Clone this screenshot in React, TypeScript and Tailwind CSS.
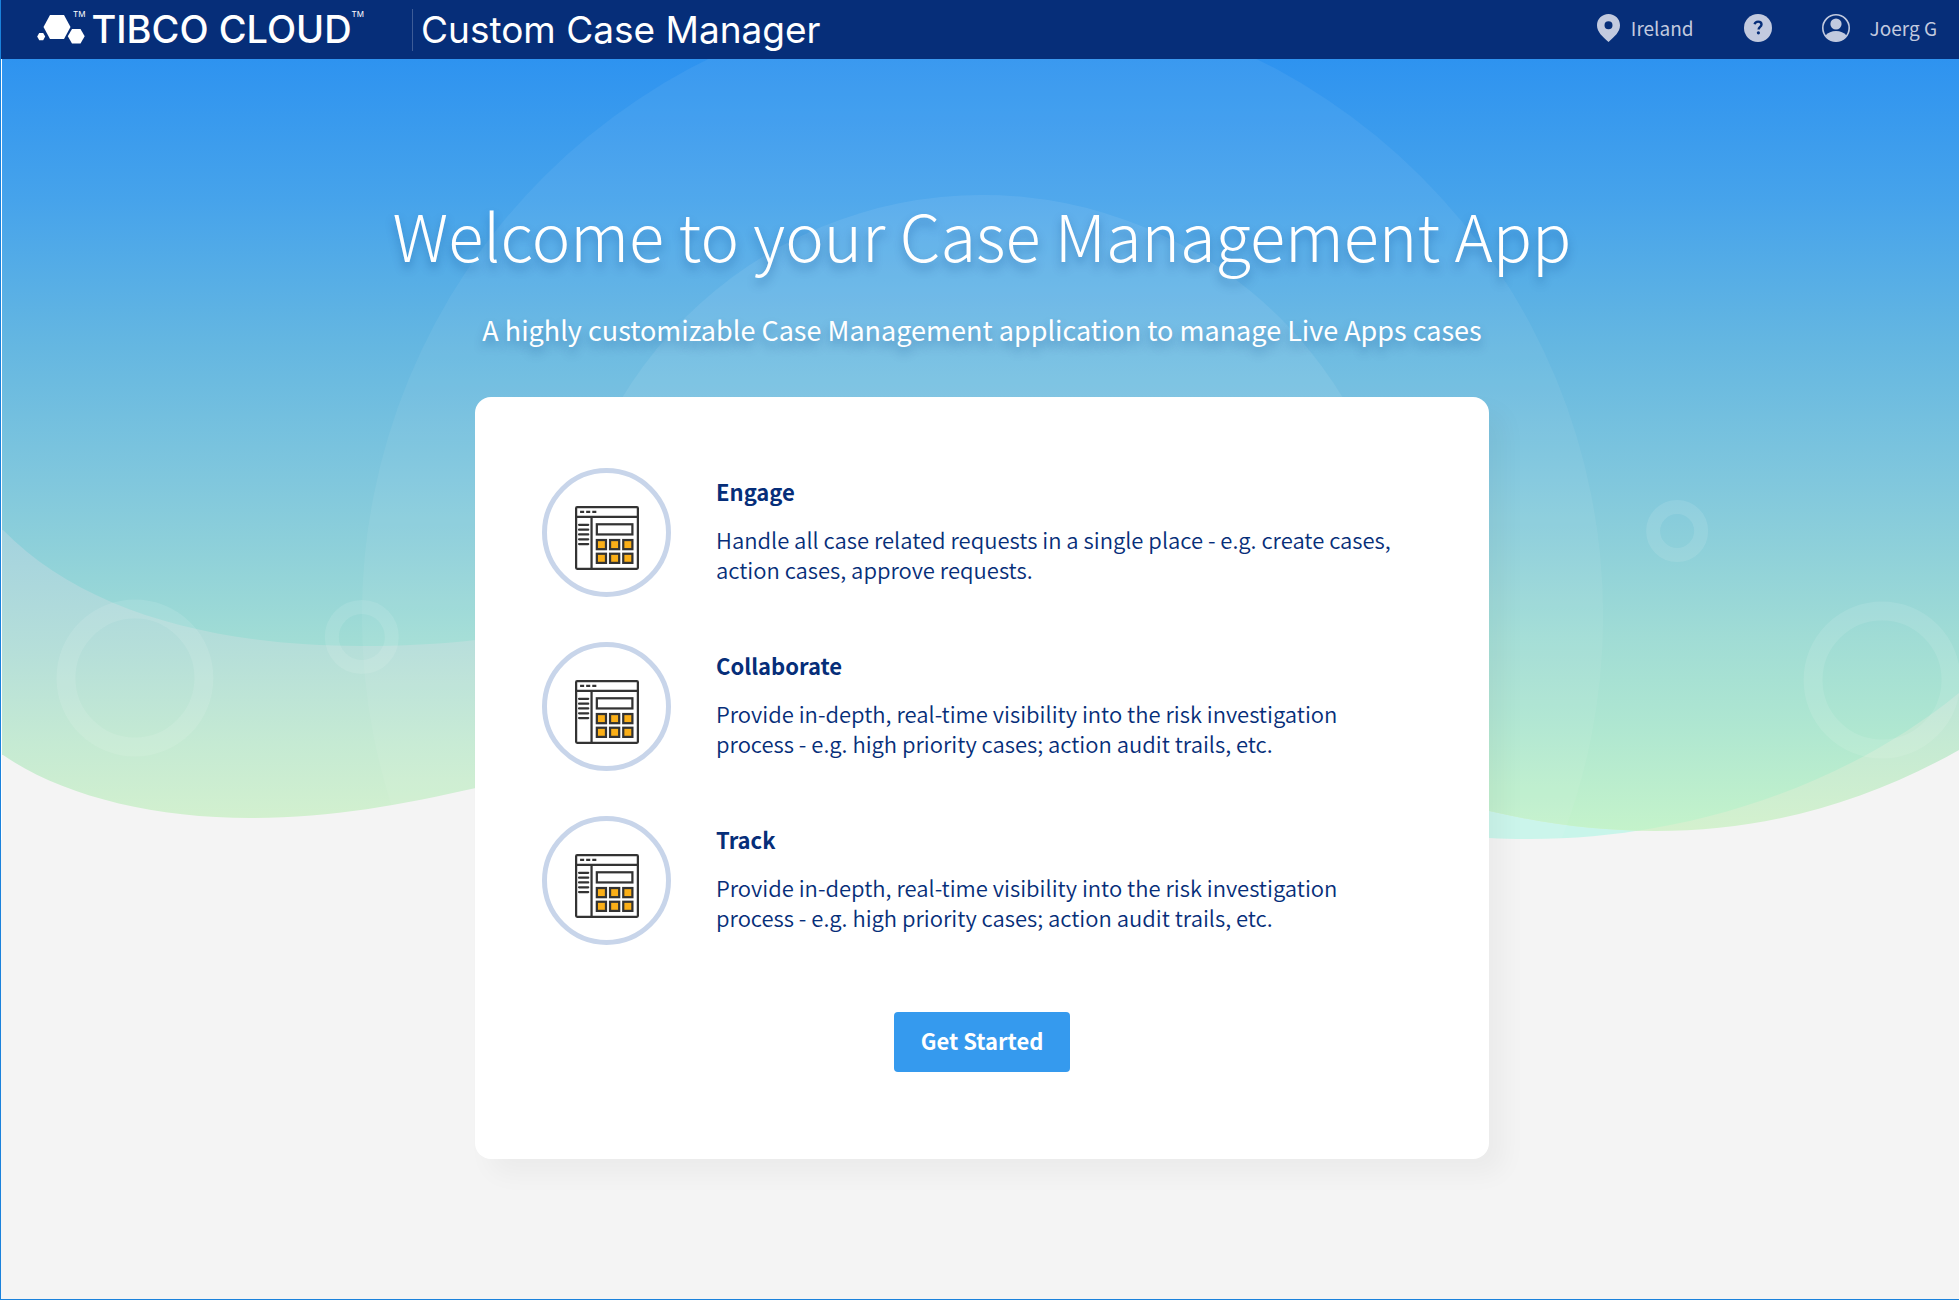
import React from 'react';

const features = [
  {
    title: 'Engage',
    text: 'Handle all case related requests in a single place - e.g. create cases, action cases, approve requests.',
  },
  {
    title: 'Collaborate',
    text: 'Provide in-depth, real-time visibility into the risk investigation process - e.g. high priority cases; action audit trails, etc.',
  },
  {
    title: 'Track',
    text: 'Provide in-depth, real-time visibility into the risk investigation process - e.g. high priority cases; action audit trails, etc.',
  },
];

function LogoMark() {
  return (
    <svg width="48" height="32" viewBox="0 0 48 32" fill="#fff" aria-hidden="true">
      <path d="M13 1h14l6.500 12L27 25H13L6.500 13Z" />
      <path d="M35 15h8.500l4.200 7.200-4.200 7.300H35l-4.200-7.300Z" />
      <path d="M2.200 19h4l2 3.600-2 3.600h-4l-2-3.600Z" />
    </svg>
  );
}

function PinIcon() {
  return (
    <svg width="23" height="28" viewBox="0 0 23 28" aria-hidden="true">
      <path
        fill="#c2cadf"
        fillRule="evenodd"
        d="M11.500 0C5 0 0 5 0 11.200 0 18 5.500 22.500 11.500 28 17.500 22.500 23 18 23 11.200 23 5 18 0 11.500 0Zm0 7.200a4 4 0 1 1 0 8 4 4 0 0 1 0-8Z"
      />
    </svg>
  );
}

function HelpIcon() {
  return (
    <svg width="28" height="28" viewBox="0 0 28 28" aria-hidden="true">
      <circle cx="14" cy="14" r="14" fill="#c2cadf" />
      <path d="M10.600 10.200c.4-1.700 1.700-2.600 3.500-2.600 2 0 3.400 1.100 3.400 2.800 0 2.400-2.900 2.500-2.900 5.100" fill="none" stroke="#062e79" strokeWidth="2.400" />
      <circle cx="14.400" cy="18.800" r="1.600" fill="#062e79" />
    </svg>
  );
}

function UserIcon() {
  return (
    <svg width="28" height="28" viewBox="0 0 28 28" aria-hidden="true">
      <circle cx="14" cy="14" r="13.200" fill="none" stroke="#c2cadf" strokeWidth="1.600" />
      <circle cx="14" cy="10" r="5.600" fill="#c2cadf" />
      <path d="M3.500 21.500c2.400-3 6.200-4.500 10.500-4.500s8.100 1.500 10.500 4.500A13.200 13.200 0 0 1 14 27.200 13.200 13.200 0 0 1 3.500 21.500Z" fill="#c2cadf" />
    </svg>
  );
}

function AppIcon() {
  return (
    <svg width="64" height="64" viewBox="0 0 63 63" fill="none" stroke="#333" strokeWidth="2.200" aria-hidden="true">
      <rect x="1.100" y="1.100" width="60.800" height="60.800" rx="1" />
      <path d="M1 10.800h61M16.300 11v51" />
      <path d="M5 5.800h4M11 5.800h4M17 5.800h4" />
      <path d="M4 18.500h9M4 23.300h9M4 28h9M4 32.800h9M4 37.500h9" strokeLinecap="round" />
      <rect x="21.500" y="18" width="35" height="10" />
      <g fill="#fbaf17">
        {[33.500, 47].map((y) =>
          [21.500, 34.500, 47.500].map((x) => <rect key={x + '-' + y} x={x} y={y} width="9" height="9" />)
        )}
      </g>
    </svg>
  );
}

const UPPER =
  'M0 0H1959V693C1840 790 1680 839 1530 839C1516 839 1502 839 1489 838C1120 815 820 600 475 640C440 644 400 646 360 646C210 646 80 610 2 530H0Z';
const LOWER =
  'M0 0H1959V750C1870 800 1770 831 1655 831C1600 831 1545 824 1489 811C1120 720 820 710 475 788C400 805 330 818 250 818C150 818 60 795 2 755H0Z';

function Backdrop() {
  return (
    <svg
      className="absolute inset-x-0 top-0 h-[840px] w-full"
      viewBox="0 0 1959 840"
      preserveAspectRatio="none"
      aria-hidden="true"
    >
      <defs>
        <linearGradient id="sky" gradientUnits="userSpaceOnUse" x1="0" y1="59" x2="0" y2="840">
          <stop offset="0" stopColor="#2e93f0" />
          <stop offset="0.180" stopColor="#46a3eb" />
          <stop offset="0.370" stopColor="#65b7e1" />
          <stop offset="0.540" stopColor="#80c7dd" />
          <stop offset="0.740" stopColor="#a0dcd5" />
          <stop offset="0.850" stopColor="#aee6d1" />
          <stop offset="1" stopColor="#c6f4ca" />
        </linearGradient>
        <linearGradient id="mist" gradientUnits="userSpaceOnUse" x1="0" y1="520" x2="0" y2="830">
          <stop offset="0" stopColor="#a2d1df" />
          <stop offset="0.430" stopColor="#b6dfd9" />
          <stop offset="0.720" stopColor="#c5ead3" />
          <stop offset="1" stopColor="#d4f1ce" />
        </linearGradient>
        <clipPath id="lower">
          <path d={LOWER} />
        </clipPath>
      </defs>
      <path d={UPPER} fill="#c8f5ea" />
      <path d={LOWER} fill="url(#mist)" />
      <path d={UPPER} fill="url(#sky)" clipPath="url(#lower)" />
      <g fill="#fff">
        <circle cx="982" cy="616" r="621" fillOpacity="0.060" />
        <circle cx="982" cy="617" r="422" fillOpacity="0.080" />
      </g>
      <g fill="none" stroke="#fff" strokeOpacity="0.100">
        <circle cx="134" cy="678" r="69" strokeWidth="19" />
        <circle cx="361" cy="637" r="30" strokeWidth="14" />
        <circle cx="1677" cy="531" r="24" strokeWidth="14" />
        <circle cx="1882" cy="680" r="69" strokeWidth="19" />
      </g>
      <rect width="1" height="840" fill="#fff" />
    </svg>
  );
}

export default function App() {
  return (
    <div className="relative min-h-screen border-b border-l border-[#1a82dc] bg-[#f4f4f4] font-['Noto_Sans_CJK_SC',sans-serif] text-[#062e79]">
      <Backdrop />
      <header className="relative flex h-[59px] items-center justify-between bg-[#062e79] pr-[22px] pl-9 text-[#c2cadf]">
        <div className="flex items-center font-['Inter',sans-serif] leading-10 text-white">
          <a href="#" className="flex items-center">
            <LogoMark />
            <sup className="-mt-6 -ml-3 text-[8px] leading-none">TM</sup>
            <span className="ml-1.5 pb-0.5 text-[38px] font-medium">TIBCO CLOUD</span>
            <sup className="-mt-6 text-[8px] leading-none">TM</sup>
          </a>
          <div className="ml-12 h-[42px] w-px bg-[#3d5c97]" />
          <div className="ml-2 text-[37px]">Custom Case Manager</div>
        </div>
        <nav className="flex items-center pb-1 text-[19px] leading-7">
          <button type="button" className="flex items-center gap-[11px]">
            <PinIcon />
            <span>Ireland</span>
          </button>
          <button type="button" className="ml-[50px]" aria-label="Help">
            <HelpIcon />
          </button>
          <button type="button" className="ml-[50px] flex items-center gap-5">
            <UserIcon />
            <span>Joerg G</span>
          </button>
        </nav>
      </header>
      <main className="relative flex flex-col items-center pt-[139px] pb-32 pl-1">
        <h1 className="text-center text-[65px] leading-[72px] font-light text-white [text-shadow:0_6px_10px_rgba(10,60,130,0.35)]">
          Welcome to your Case Management App
        </h1>
        <p className="mt-10 text-center text-[27px] leading-10 text-white [text-shadow:0_6px_10px_rgba(10,60,130,0.35)]">
          A highly customizable Case Management application to manage Live Apps cases
        </p>
        <section className="mt-[47px] flex w-full max-w-[1014px] flex-col items-center rounded-2xl bg-white px-[67px] pt-[71px] pb-[87px] shadow-[15px_15px_26px_rgba(0,0,0,0.04)]">
          <ul className="flex w-full flex-col gap-[45px]">
            {features.map((f) => (
              <li key={f.title} className="flex gap-[45px]">
                <div className="flex size-[129px] shrink-0 items-center justify-center rounded-full border-[5px] border-[#c8d5ea] pt-2.5">
                  <AppIcon />
                </div>
                <div className="max-w-[690px] pt-2">
                  <h2 className="text-[22px] leading-[30px] font-bold">{f.title}</h2>
                  <p className="mt-[18px] text-[22px] leading-[30px] font-[350]">{f.text}</p>
                </div>
              </li>
            ))}
          </ul>
          <button type="button" className="mt-[67px] h-[60px] w-44 rounded bg-[#359aee] pb-1 text-[22px] font-semibold text-white">
            Get Started
          </button>
        </section>
      </main>
    </div>
  );
}
